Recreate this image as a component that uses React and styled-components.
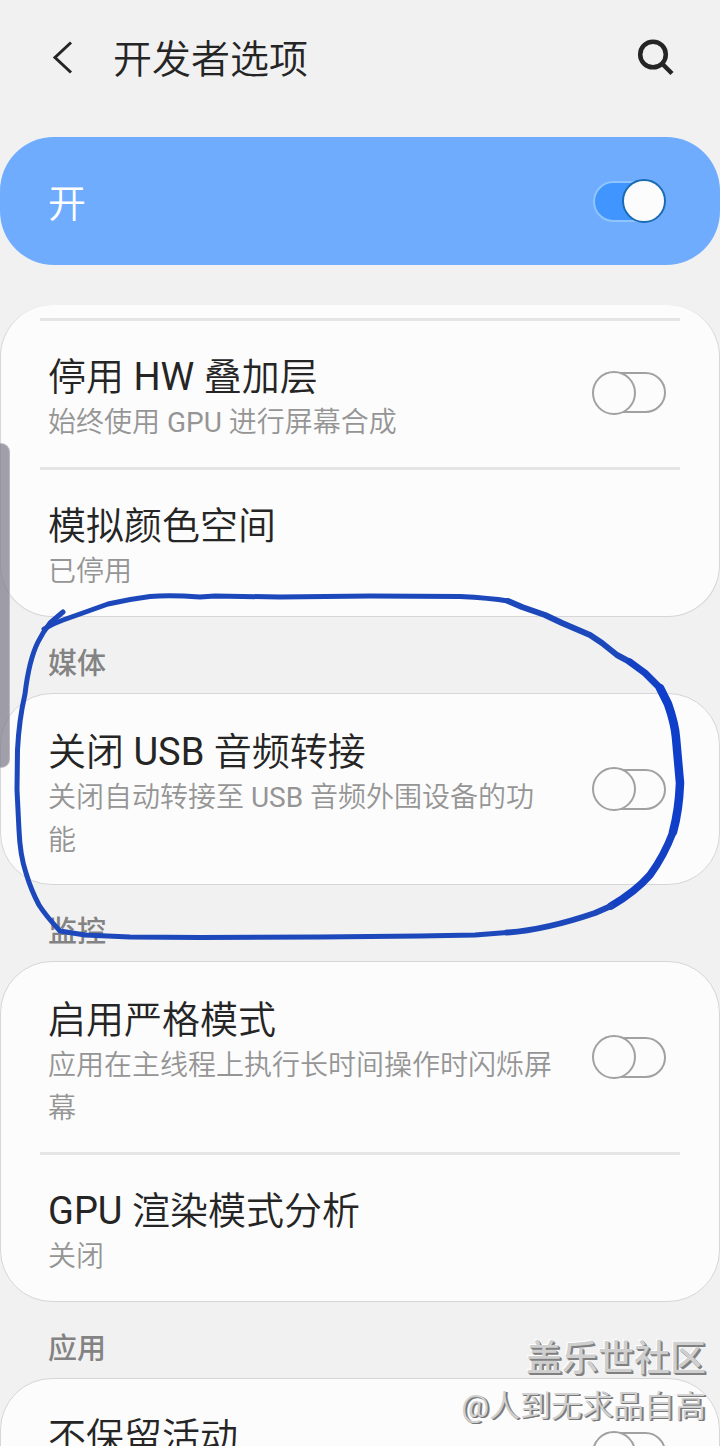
import React from 'react';
import styled, { createGlobalStyle } from 'styled-components';

const GlobalStyle = createGlobalStyle`
	*,
	*::before,
	*::after {
		box-sizing: border-box;
	}
	body {
		margin: 0;
		background: #f1f1f1;
		color: #252525;
		font-family: Roboto, 'Noto Sans CJK SC DemiLight', 'Noto Sans CJK SC', sans-serif;
	}
	h1, h2, p {
		margin: 0;
	}
`;

const Page = styled.div`
	position: relative;
	height: 100vh;
	overflow: hidden;
`;

const Header = styled.header`
	display: flex;
	align-items: center;
	height: 115px;
	margin-bottom: 22px;
	padding: 0 40px;

	h1 {
		flex: 1;
		padding-top: 4px;
		font-size: 39px;
		font-weight: 400;
		line-height: 48px;
	}
`;

const IconButton = styled.button`
	display: flex;
	width: ${(props) => props.$width};
	padding: 0;
	border: 0;
	background: none;
	color: #252525;
	cursor: pointer;
`;

const Banner = styled.label`
	display: flex;
	align-items: center;
	justify-content: space-between;
	height: 128px;
	margin-bottom: 40px;
	padding: 0 54px 0 48px;
	border-radius: 54px;
	background: #70acfe;
	color: #fff;

	span {
		padding-top: 6px;
		font-size: 38px;
		line-height: 47px;
	}
`;

const Toggle = styled.input.attrs({ type: 'checkbox', role: 'switch' })`
	appearance: none;
	display: grid;
	flex: none;
	align-items: center;
	width: 74px;
	height: 44px;
	margin: 0;
	cursor: pointer;

	&::before,
	&::after {
		content: '';
		grid-area: 1 / 1;
		border: 2px solid #a1a1a1;
		border-radius: 22px;
		background: #fcfcfc;
	}
	&::before {
		height: 41px;
		margin-left: 2px;
	}
	&::after {
		width: 44px;
		height: 44px;
	}
	&:checked::before {
		margin: 0 2px 0 1px;
		border-color: #8fc4fc;
		background: #4096fe;
	}
	&:checked::after {
		justify-self: end;
		border-color: #1a6bb4;
	}
`;

const Card = styled.div`
	padding-top: ${(props) => (props.$cut ? '13px' : '0')};
	border: 1px solid #d6d6d6;
	border-top-width: ${(props) => (props.$cut ? '0' : '1px')};
	border-radius: 52px;
	background: #fcfcfc;
`;

const RowText = styled.div`
	flex: 1;
	padding: 35px 0 22px;

	.title {
		font-size: 38px;
		line-height: 47px;
	}
	.summary {
		color: #959595;
		font-size: 28px;
		line-height: 43px;
	}
`;

const Row = styled.label`
	display: flex;
	align-items: center;
	gap: 34px;
	min-height: 147px;
	margin: 0 39px;
	padding: 0 14px 0 8px;
	box-shadow: ${(props) => (props.$divided ? 'inset 0 3px 0 #e5e5e5' : 'none')};

	${RowText} {
		align-self: flex-start;
		padding: ${(props) => (props.$divided ? '36px 0 23px' : '35px 0 22px')};
	}
`;

const SectionTitle = styled.h2`
	padding: 26px 48px 8px;
	color: #838383;
	font-family: Roboto, 'Noto Sans CJK SC', sans-serif;
	font-size: 29px;
	font-weight: 500;
	line-height: 42px;
`;

const ScrollHandle = styled.div`
	position: absolute;
	top: 443px;
	left: 0;
	width: 10px;
	height: 325px;
	border: 1px solid rgba(190, 190, 196, 0.8);
	border-left: 0;
	border-radius: 0 9px 9px 0;
	background: rgba(126, 123, 138, 0.72);
`;

const Ink = styled.svg`
	position: absolute;
	top: 0;
	left: 0;
	width: 100%;
	fill: none;
	stroke: #1c48bb;
	stroke-linecap: round;
	stroke-linejoin: round;
	pointer-events: none;
`;

const Watermark = styled.div`
	position: absolute;
	right: 14px;
	bottom: 15px;
	text-align: right;
	pointer-events: none;

	.community {
		color: #cfcfcf;
		font-family: Roboto, 'Noto Sans CJK SC', sans-serif;
		font-size: 36px;
		font-weight: 500;
		line-height: 48px;
		text-shadow: 1px 1px 0 #808080, 2px 2px 0 #808080, -1px -1px 0 #fff;
	}
	.user {
		color: #d0d0d0;
		font-size: 31px;
		line-height: 48px;
		text-shadow: 1px 1px 0 #777, 2px 1px 0 #858585;
	}
`;

function Item({ title, summary, divided, toggle }) {
	return (
		<Row as={toggle ? 'label' : 'div'} $divided={divided}>
			<RowText>
				<p className="title">{title}</p>
				{summary && <p className="summary">{summary}</p>}
			</RowText>
			{toggle && <Toggle />}
		</Row>
	);
}

export default function App() {
	return (
		<Page>
			<GlobalStyle />
			<Header>
				<IconButton $width="73px" aria-label="返回">
					<svg width="44" height="44" viewBox="0 0 44 44" fill="none" stroke="currentColor" strokeWidth="3">
						<path d="M31 6.500 15 21.500 31 36.500" />
					</svg>
				</IconButton>
				<h1>开发者选项</h1>
				<IconButton $width="44px" aria-label="搜索">
					<svg width="44" height="44" viewBox="0 0 44 44" fill="none" stroke="currentColor" strokeWidth="4.500">
						<circle cx="17" cy="18.500" r="12.800" />
						<path d="M26 27.500 36 37.500" />
					</svg>
				</IconButton>
			</Header>
			<Banner>
				<span>开</span>
				<Toggle defaultChecked />
			</Banner>
			<Card $cut>
				<Item divided toggle title="停用 HW 叠加层" summary="始终使用 GPU 进行屏幕合成" />
				<Item divided title="模拟颜色空间" summary="已停用" />
			</Card>
			<SectionTitle>媒体</SectionTitle>
			<Card>
				<Item toggle title="关闭 USB 音频转接" summary="关闭自动转接至 USB 音频外围设备的功能" />
			</Card>
			<SectionTitle>监控</SectionTitle>
			<Card>
				<Item toggle title="启用严格模式" summary="应用在主线程上执行长时间操作时闪烁屏幕" />
				<Item divided title="GPU 渲染模式分析" summary="关闭" />
			</Card>
			<SectionTitle>应用</SectionTitle>
			<Card>
				<Item toggle title="不保留活动" />
			</Card>
			<ScrollHandle />
			<Ink viewBox="0 0 720 1446" aria-hidden="true">
				<path
					strokeWidth="5"
					d="M44 629Q52 624 63 620L80 614 108 604Q130 599 150 596.500Q170 595 200 597L215 596 280 597 370 596 460 596.500Q490 598 508 601"
				/>
				<path strokeWidth="6" d="M508 601 522 607 545 615 562 623 590 635 602 643 617 655 630 662" />
				<path stroke="#1440c4" strokeWidth="7" d="M630 662 645 673 660 688" />
				<path stroke="#0f3fca" strokeWidth="8.500" d="M660 688 668 704Q675 724 676 738L680 783Q679 810 673 832" />
				<path stroke="#1440c4" strokeWidth="7.500" d="M673 832Q664 856 650 875Q635 892 611 906" />
				<path strokeWidth="6" d="M611 906 595 913Q545 930 507 932.500" />
				<path
					strokeWidth="5"
					d="M507 932.500 475 935 420 936 320 937 200 937.500 130 937 85 935 60 931Q46 916 39 905Q31 890 26 873Q20 855 19 830L17 790 17.500 750Q19 720 25 694Q29 660 38 642Q43 632 50 623L63 612"
				/>
			</Ink>
			<Watermark>
				<div className="community">盖乐世社区</div>
				<div className="user">@人到无求品自高</div>
			</Watermark>
		</Page>
	);
}
